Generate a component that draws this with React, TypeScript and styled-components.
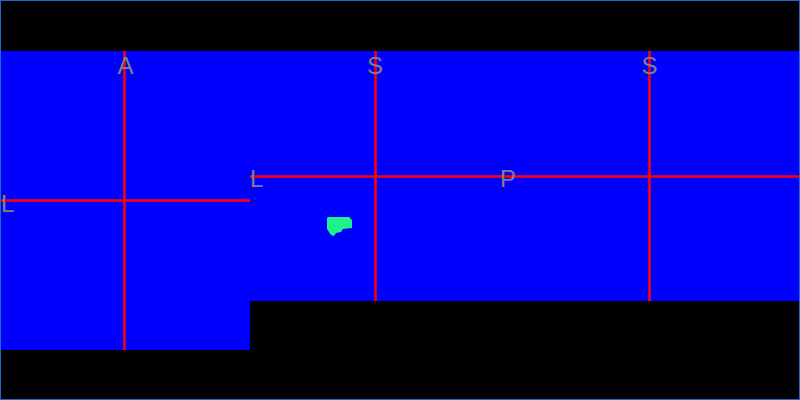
import styled, { createGlobalStyle } from 'styled-components';

interface ViewportInfo {
  id: string;
  width: number;
  height: number;
  crossX: number;
  crossY: number;
  topLabel: string;
  leftLabel: string;
  showMask?: boolean;
}

const viewports: ViewportInfo[] = [
  { id: 'axial', width: 249, height: 299, crossX: 122, crossY: 148, topLabel: 'A', leftLabel: 'L' },
  { id: 'coronal', width: 250, height: 250, crossX: 124, crossY: 124, topLabel: 'S', leftLabel: 'L', showMask: true },
  { id: 'sagittal', width: 299, height: 250, crossX: 148, crossY: 124, topLabel: 'S', leftLabel: 'P' },
];

const GlobalStyle = createGlobalStyle`
  html, body {
    margin: 0;
    padding: 0;
    background: #000;
  }
`;

// segmentation mask painted on the coronal slice
const MaskBlob = () => (
  <MaskSvg width="30" height="22" viewBox="0 0 30 22">
    <polygon
      fill="#20f08a"
      points="2,1 23,1 26,4 26,12 17,13 15,16 10,17 8,20 5,19 3,16 1,13 1,2"
    />
  </MaskSvg>
);

export default function App() {
  return (
    <>
      <GlobalStyle />
      <Frame>
        <ViewportRow>
          {viewports.map((vp) => (
            <Viewport
              key={vp.id}
              $w={vp.width}
              $h={vp.height}
              $cx={vp.crossX}
              $cy={vp.crossY}
            >
              {vp.showMask && <MaskBlob />}
              <TopLabel>{vp.topLabel}</TopLabel>
              <LeftLabel>{vp.leftLabel}</LeftLabel>
            </Viewport>
          ))}
        </ViewportRow>
      </Frame>
    </>
  );
}

const Frame = styled.div`
  width: 800px;
  height: 400px;
  box-sizing: border-box;
  border: 1px solid #1a6bc8;
  background: #000;
  overflow: hidden;
  padding-top: 50px;
  font-family: 'Liberation Sans', Arial, sans-serif;
`;

const ViewportRow = styled.div`
  display: flex;
  align-items: flex-start;
`;

// crosshair: two 3px red stripes over the blue slice
const Viewport = styled.div<{ $w: number; $h: number; $cx: number; $cy: number }>`
  position: relative;
  flex: none;
  display: grid;
  width: ${({ $w }) => $w}px;
  height: ${({ $h }) => $h}px;
  background-color: #0000ff;
  background-image: linear-gradient(
      to right,
      rgba(255, 0, 0, 0.8) 0 1px,
      #ff0000 1px 2px,
      rgba(255, 0, 0, 0.8) 2px 3px
    ),
    linear-gradient(
      to bottom,
      rgba(255, 0, 0, 0.8) 0 1px,
      #ff0000 1px 2px,
      rgba(255, 0, 0, 0.8) 2px 3px
    );
  background-repeat: no-repeat;
  background-size: 3px 100%, 100% 3px;
  background-position: ${({ $cx }) => $cx}px 0, 0 ${({ $cy }) => $cy}px;
  overflow: hidden;
`;

const OrientLabel = styled.span`
  grid-area: 1 / 1;
  font-size: 24px;
  line-height: 24px;
  color: #808080;
`;

const TopLabel = styled(OrientLabel)`
  align-self: start;
  justify-self: center;
  margin-top: 3px;
`;

const LeftLabel = styled(OrientLabel)`
  align-self: center;
  justify-self: start;
  margin-top: 6px;
`;

const MaskSvg = styled.svg`
  position: absolute;
  left: 76px;
  top: 165px;
`;
